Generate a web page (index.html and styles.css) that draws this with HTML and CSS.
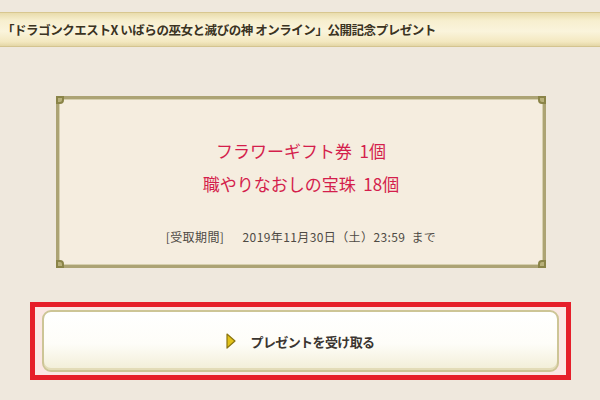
FILE: index.html
```html
<!DOCTYPE html>
<html lang="ja">
<head>
<meta charset="utf-8">
<link rel="stylesheet" href="styles.css">
</head>
<body>
<div class="page">
  <div class="header">「ドラゴンクエストX いばらの巫女と滅びの神 オンライン」公開記念プレゼント</div>
  <div class="frame">
    <span class="corner tl"></span><span class="corner tr"></span><span class="corner bl"></span><span class="corner br"></span>
    <div class="items">
      <p class="item">フラワーギフト券&nbsp;&nbsp;1個</p>
      <p class="item">職やりなおしの宝珠&nbsp;&nbsp;18個</p>
    </div>
    <p class="period">[受取期間]&nbsp;&nbsp;&nbsp;2019年11月30日（土）23:59 まで</p>
  </div>
  <div class="highlight">
    <button class="btn">
      <svg class="arrow" width="10" height="16" viewBox="0 0 10 16"><path d="M1 1 L9 8 L1 15 Z" fill="#e2c21a" stroke="#8a7410" stroke-width="1.2" stroke-linejoin="round"/></svg>
      <span>プレゼントを受け取る</span>
    </button>
  </div>
</div>
</body>
</html>
```
FILE: styles.css
```css
html, body { margin: 0; padding: 0; }
body {
  background: #efe8dd;
  font-family: "Noto Sans CJK JP", "Noto Sans", sans-serif;
  width: 600px;
  height: 400px;
  overflow: hidden;
}
.page { padding-top: 12px; }
.header {
  height: 35px;
  display: flex;
  align-items: center;
  padding-left: 2px;
  font-size: 12.5px;
  font-weight: bold;
  letter-spacing: -0.45px;
  color: #3b3322;
  background: linear-gradient(180deg, #e7d9a8 0%, #f7efcf 25%, #faf4dc 55%, #f3e8c0 85%, #e0d2a0 100%);
  box-shadow: inset 0 1px 0 #d8c790, inset 0 -1px 0 #d4c490;
}
.frame {
  position: relative;
  margin: 49px 54px 0 56px;
  height: 166px;
  border: 3px solid #aca374;
  box-shadow: inset 0 0 0 1px #d6cfae;
  background: #f5eddf;
  display: flex;
  flex-direction: column;
  align-items: center;
}
.corner {
  position: absolute;
  width: 8px;
  height: 8px;
  border: 2px solid #8a8448;
  box-sizing: border-box;
  background: #b8b07a;
}
.corner.tl { top: -3px; left: -3px; border-radius: 0 0 4px 0; }
.corner.tr { top: -3px; right: -3px; border-radius: 0 0 0 4px; }
.corner.bl { bottom: -3px; left: -3px; border-radius: 0 4px 0 0; }
.corner.br { bottom: -3px; right: -3px; border-radius: 4px 0 0 0; }
.items {
  margin-top: 40px;
  display: flex;
  flex-direction: column;
  align-items: center;
  gap: 10px;
}
.item {
  margin: 0;
  font-size: 17px;
  line-height: 23px;
  color: #d41e4c;
  letter-spacing: 0;
}
.period {
  margin: 35px 0 0;
  font-size: 12px;
  line-height: 14px;
  color: #4e4a44;
  letter-spacing: 0.4px;
  word-spacing: 3px;
}
.highlight {
  margin: 34px 29px 0 30px;
  border: 5px solid #e61f2a;
  padding: 3px 7px 3px 7px;
  background: #fbe7e4;
}
.btn {
  display: flex;
  width: 100%;
  height: 62px;
  align-items: center;
  justify-content: center;
  gap: 10px;
  border: 2px solid #cdc596;
  border-radius: 9px;
  background: linear-gradient(180deg, #ffffff 0%, #fefdf8 55%, #f2eed7 100%);
  box-shadow: inset 0 -2px 0 #e3dcb8;
  font-family: "Noto Sans CJK JP", sans-serif;
  font-size: 13px;
  font-weight: bold;
  color: #3a3530;
  letter-spacing: -0.6px;
  padding: 0 0 0 0;
}
.arrow { margin-right: 4px; }
```
